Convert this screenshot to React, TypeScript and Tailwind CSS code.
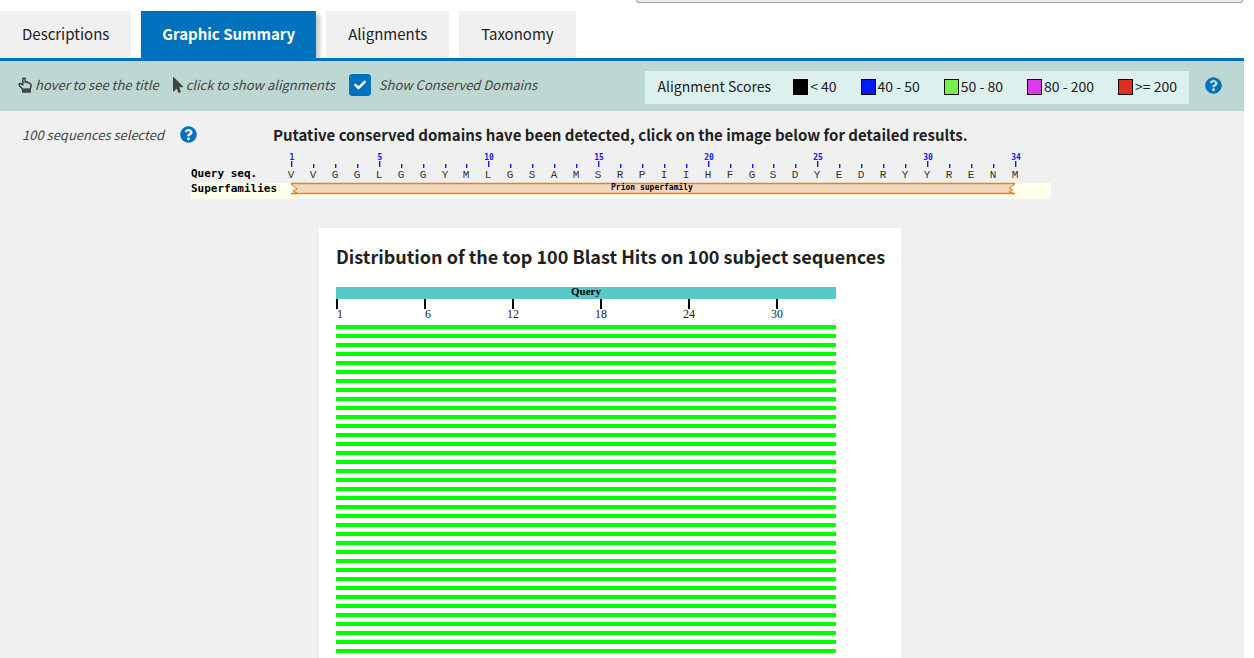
import React from "react";
import { FaCheck, FaMousePointer, FaQuestionCircle } from "react-icons/fa";

const tabs = ["Descriptions", "Graphic Summary", "Alignments", "Taxonomy"];

const scores = [
  { label: "< 40", swatch: "bg-black" },
  { label: "40 - 50", swatch: "bg-[#0019f5]" },
  { label: "50 - 80", swatch: "bg-[#75f04a]" },
  { label: "80 - 200", swatch: "bg-[#dd3af0]" },
  { label: ">= 200", swatch: "bg-[#dd3021]" },
];

const sequence = "VVGGLGGYMLGSAMSRPIIHFGSDYEDRYYRENM".split("");
const axis = [1, 6, 12, 18, 24, 30];
const hits = Array.from({ length: 100 }, (_, i) => i + 1);

function HandIcon() {
  return (
    <svg viewBox="0 0 14 16" className="h-4 w-3.5 shrink-0" aria-hidden="true">
      <path
        d="M4.8 12.2 L1.9 9.2 C.4 7.6 1.4 5.9 3 6.8 L4.8 7.8 V2.4 C4.8 .6 7.2.6 7.2 2.4 V5.2 C8.2 4.7 9.2 5 9.6 5.8 C10.6 5.4 11.4 5.8 11.7 6.6 C12.8 6.6 13.1 7.4 13.1 8.4 C13.1 10 12.4 10.8 12.3 12.2 Z"
        fill="none"
        stroke="currentColor"
        strokeWidth="1.6"
        strokeLinejoin="round"
      />
      <path d="M4 11.8h8.9v3.4q0 .6-.6.6H4.6q-.6 0-.6-.6z" fill="currentColor" />
    </svg>
  );
}

function HelpLink({ label }: { label: string }) {
  return (
    <a href="#help" aria-label={label} className="shrink-0 text-[#0071bc]">
      <FaQuestionCircle className="size-[17px]" />
    </a>
  );
}

function ConservedDomains() {
  const x = (i: number) => 101 + Math.round(i * 21.93);
  return (
    <svg viewBox="0 0 861 48" className="block h-12 w-[861px]" role="img" aria-label="Conserved domains on the query sequence">
      <rect x="1" y="31" width="860" height="16" fill="#ffffea" />
      {sequence.map((letter, i) => {
        const n = i + 1;
        const major = n === 1 || n === 34 || n % 5 === 0;
        return (
          <g key={n} textAnchor="middle">
            {major && (
              <text x={x(i) + 1} y="8" fill="#1414ff" className="font-['DejaVu_Sans_Mono',monospace] text-[8px] font-bold">
                {n}
              </text>
            )}
            <rect x={x(i)} y={major ? 9 : 12} width="1.4" height={major ? 6 : 4} fill="#1414ff" />
            <text x={x(i)} y="26" fill="#333" className="font-['Liberation_Mono',monospace] text-[11px]">
              {letter}
            </text>
          </g>
        );
      })}
      <text x="1" y="25" className="font-['DejaVu_Sans_Mono',monospace] text-[11px] font-bold">Query seq.</text>
      <text x="1" y="40" className="font-['DejaVu_Sans_Mono',monospace] text-[11px] font-bold">Superfamilies</text>
      <path d="M101 31.5H825L819 36L823 38L819 40L825 41.5H101L107 41L103 39L107 37Z" fill="#f3d8c0" />
      <path d="M101 31.5H825M101 41.5H825" stroke="#e58225" strokeWidth="1.4" />
      <path d="M101 32L107 37L103 39L107 41L101 41.5M825 32L819 36L823 38L819 40L824 41.5" fill="none" stroke="#d9741a" />
      <text x="462" y="38" textAnchor="middle" className="font-['DejaVu_Sans_Mono',monospace] text-[8px] font-bold">
        Prion superfamily
      </text>
    </svg>
  );
}

export default function App() {
  return (
    <div className="h-screen overflow-hidden bg-white pr-2.5 font-['Noto_Sans_CJK_SC',sans-serif] text-[15px] leading-6 text-[#212121]">
      <div className="flex h-[11px] justify-end pr-px">
        <div className="h-[3px] w-[607px] rounded-b-md border border-t-0 border-[#a0a0a0] bg-[#ececec]" />
      </div>

      <nav className="flex gap-2.5 overflow-hidden border-b-3 border-[#0071bc]" role="tablist">
        {tabs.map((tab) => {
          const active = tab === "Graphic Summary";
          return (
            <button
              key={tab}
              role="tab"
              aria-selected={active}
              className={
                active
                  ? "h-[47px] bg-[#0071bc] px-[21px] pb-0.5 font-bold text-white shadow-[4px_4px_4px_#cccccc]"
                  : "h-[47px] bg-[#f0f0f0] px-[22px] pb-0.5"
              }
            >
              {tab}
            </button>
          );
        })}
      </nav>

      <section className="flex h-[50px] items-center bg-[#bdd8d3] pl-[18px]">
        <div className="flex items-center gap-3.5 pb-0.5 text-[13px] text-[#444] italic">
          <span className="flex items-center gap-[3px]">
            <HandIcon />
            hover to see the title
          </span>
          <span className="flex items-center gap-[3px]">
            <FaMousePointer className="h-4 w-2.5" />
            click to show alignments
          </span>
          <label className="flex items-center gap-2">
            <span className="grid size-[22px] place-items-center">
              <input
                type="checkbox"
                defaultChecked
                className="peer col-start-1 row-start-1 size-[22px] appearance-none rounded-[3px] border border-[#0071bc] checked:bg-[#0071bc]"
              />
              <FaCheck className="pointer-events-none col-start-1 row-start-1 hidden size-3 text-white peer-checked:block" />
            </span>
            Show Conserved Domains
          </label>
        </div>
        <div className="mt-0.5 mr-4 ml-auto flex h-[33px] items-center bg-[#dcf0ed] px-3 pb-0.5 text-sm">
          <span className="mr-[22px]">Alignment Scores</span>
          <ul className="flex gap-6">
            {scores.map((s) => (
              <li key={s.label} className="flex items-center gap-0.5">
                <span className={`mt-0.5 h-4 w-[15px] border border-black ${s.swatch}`} />
                {s.label}
              </li>
            ))}
          </ul>
        </div>
        <div className="mr-[22px] pb-0.5">
          <HelpLink label="Help with alignment scores" />
        </div>
      </section>

      <main className="bg-[#f0f0f0]">
        <div className="flex h-[41px] items-center pt-1.5 pl-[22px]">
          <div className="flex w-[251px] items-center gap-4 text-[13px] text-[#444] italic">
            100 sequences selected
            <HelpLink label="Help with selected sequences" />
          </div>
          <h2 className="font-bold">
            Putative conserved domains have been detected, click on the image below for detailed results.
          </h2>
        </div>
        <a href="#domains" className="ml-[190px] block w-[861px]">
          <ConservedDomains />
        </a>

        <div className="pt-7 pr-6">
          <section className="mx-auto w-[582px] bg-white px-[17px] pt-3.5">
            <h3 className="text-lg leading-7 font-bold whitespace-nowrap">
              Distribution of the top 100 Blast Hits on 100 subject sequences
            </h3>
            <div className="mt-[17px] w-[500px]">
              <div className="h-3 bg-[#58c8c8] text-center font-['Liberation_Serif',serif] text-[11px] leading-2 font-bold text-black">
                Query
              </div>
              <ol className="flex h-[26px] font-['Liberation_Serif',serif] text-xs leading-[10px]">
                {axis.map((n) => (
                  <li key={n} className="w-[88px] shrink-0">
                    <span className="block h-2.5 w-0.5 bg-black" />
                    <span className="-ml-[7px] block w-3.5 text-right">{n}</span>
                  </li>
                ))}
              </ol>
              <div className="flex flex-col gap-[5px]">
                {hits.map((n) => (
                  <a key={n} href={`#hit-${n}`} aria-label={`Hit ${n}`} className="block h-1 bg-[#00ff00]" />
                ))}
              </div>
            </div>
          </section>
        </div>
      </main>
    </div>
  );
}
